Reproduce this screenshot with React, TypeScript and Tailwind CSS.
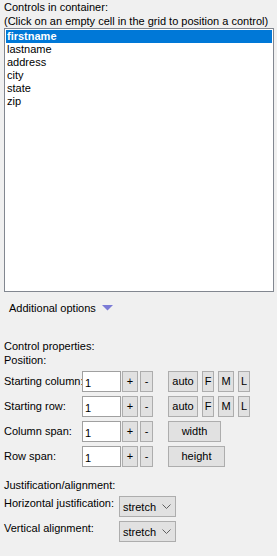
import React from "react";

const items = ["firstname", "lastname", "address", "city", "state", "zip"];

function Btn({ children, w }: { children: React.ReactNode; w: string }) {
  return (
    <button
      className={`${w} h-[21px] border border-[#adadad] bg-[#e1e1e1] text-black text-[11px] leading-none flex items-center justify-center`}
    >
      {children}
    </button>
  );
}

function SpinRow({ label, extra }: { label: string; extra: React.ReactNode }) {
  return (
    <div className="flex items-start h-[25px]">
      <div className="w-[78px] pt-[3px] whitespace-nowrap">{label}</div>
      <div className="w-[39px] h-[21px] border border-[#a0a0a0] bg-white px-[2px] pt-[4px] leading-[14px]">1</div>
      <div className="ml-[1px] flex gap-[2px]">
        <Btn w="w-[16px]">+</Btn>
        <Btn w="w-[13px]">-</Btn>
      </div>
      <div className="ml-[15px] flex gap-[4px]">{extra}</div>
    </div>
  );
}

function Combo() {
  return (
    <div className="w-[57px] h-[21px] border border-[#adadad] bg-[#e1e1e1] flex items-center pl-[3px] pr-[4px] justify-between">
      <span>stretch</span>
      <svg width="9" height="5" viewBox="0 0 9 5">
        <path d="M0.5 0.5 L4.5 4.5 L8.5 0.5" fill="none" stroke="#606060" strokeWidth="1" />
      </svg>
    </div>
  );
}

export default function App() {
  return (
    <div
      className="w-[277px] h-[556px] bg-[#f0f0f0] text-black text-[11px] leading-[14px] pl-[4px] pr-[3px] overflow-hidden"
      style={{ fontFamily: "Tahoma, 'Liberation Sans', Arial, sans-serif" }}
    >
      <div className="pt-0">Controls in container:</div>
      <div>(Click on an empty cell in the grid to position a control)</div>
      <div className="h-[264px] border border-[#828790] bg-white p-[1px]">
        {items.map((it, i) => (
          <div
            key={it}
            className={`h-[13px] leading-[13px] pl-[1px] ${i === 0 ? "bg-[#0078d7] text-white font-bold" : ""}`}
          >
            {it}
          </div>
        ))}
      </div>

      <div className="mt-[9px] ml-[5px] flex items-center gap-[6px]">
        <span>Additional options</span>
        <svg width="11" height="6" viewBox="0 0 11 6">
          <path d="M0 0 L11 0 L5.5 5.5 Z" fill="#7b7bd6" />
        </svg>
      </div>

      <div className="mt-[24px]">Control properties:</div>
      <div className="mb-[4px]">Position:</div>

      <SpinRow
        label="Starting column:"
        extra={
          <>
            <Btn w="w-[30px]">auto</Btn>
            <Btn w="w-[12px]">F</Btn>
            <Btn w="w-[16px]">M</Btn>
            <Btn w="w-[12px]">L</Btn>
          </>
        }
      />
      <SpinRow
        label="Starting row:"
        extra={
          <>
            <Btn w="w-[30px]">auto</Btn>
            <Btn w="w-[12px]">F</Btn>
            <Btn w="w-[16px]">M</Btn>
            <Btn w="w-[12px]">L</Btn>
          </>
        }
      />
      <SpinRow label="Column span:" extra={<Btn w="w-[53px]">width</Btn>} />
      <SpinRow label="Row span:" extra={<Btn w="w-[57px]">height</Btn>} />

      <div className="mt-[7px]">Justification/alignment:</div>
      <div className="mt-[4px] flex items-start h-[25px]">
        <div className="w-[115px] whitespace-nowrap">Horizontal justification:</div>
        <Combo />
      </div>
      <div className="flex items-start h-[24px]">
        <div className="w-[115px] whitespace-nowrap">Vertical alignment:</div>
        <Combo />
      </div>
    </div>
  );
}
